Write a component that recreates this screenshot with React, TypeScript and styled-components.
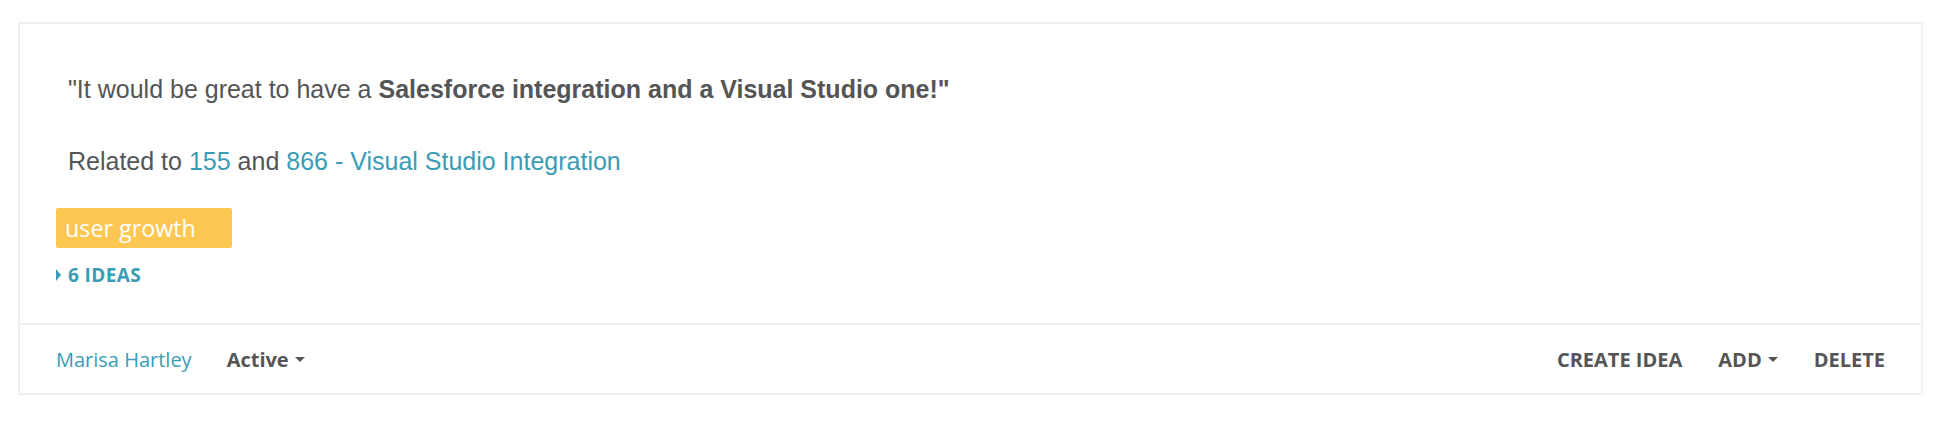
import React from "react";
import styled, { createGlobalStyle } from "styled-components";

const Global = createGlobalStyle`
  html, body { margin: 0; padding: 0; background: #ffffff; }
  body { font-family: "Open Sans", "Liberation Sans", sans-serif; }
  * { box-sizing: border-box; }
`;

const Page = styled.div`
  padding: 22px 23px 0 18px;
`;

const Card = styled.div`
  border: 2px solid #f0f0f0;
  background: #fff;
`;

const Body = styled.div`
  padding: 50px 36px 35px 36px;
`;

const Quote = styled.div`
  margin-left: 12px;
  font-family: "Liberation Sans", Arial, sans-serif;
  font-size: 25px;
  line-height: 30px;
  color: #555555;
`;

const Para = styled.p<{ $gap?: number }>`
  margin: ${(p) => p.$gap ?? 0}px 0 0 0;
`;

const Link = styled.a`
  color: #3a9cb5;
  text-decoration: none;
`;

const Tag = styled.div`
  margin-top: 32px;
  display: inline-flex;
  align-items: center;
  width: 176px;
  height: 40px;
  padding-left: 9px;
  background: #fec752;
  border-radius: 2px;
  color: #ffffff;
  font-size: 23.3px;
  font-family: "Open Sans", sans-serif;
`;

const Ideas = styled.div`
  margin-top: 14px;
  display: flex;
  align-items: center;
  gap: 7px;
  color: #3a9cb5;
  font-weight: 700;
  font-size: 19px;
  line-height: 26px;
  letter-spacing: 0.4px;
  text-transform: uppercase;
`;

const RightTri = styled.span`
  width: 0;
  height: 0;
  border-top: 6px solid transparent;
  border-bottom: 6px solid transparent;
  border-left: 5px solid #3a9cb5;
`;

const Footer = styled.div`
  border-top: 2px solid #f0f0f0;
  height: 70px;
  padding: 0 36px;
  display: flex;
  align-items: center;
  justify-content: space-between;
`;

const Group = styled.div<{ $gap: number }>`
  display: flex;
  align-items: center;
  gap: ${(p) => p.$gap}px;
`;

const Author = styled.a`
  color: #3a9cb5;
  font-size: 20px;
  text-decoration: none;
`;

const Action = styled.span<{ $upper?: boolean }>`
  display: inline-flex;
  align-items: center;
  gap: 6px;
  font-weight: 700;
  font-size: 20px;
  color: #555555;
  text-transform: ${(p) => (p.$upper ? "uppercase" : "none")};
`;

const DownTri = styled.span`
  width: 0;
  height: 0;
  border-left: 5px solid transparent;
  border-right: 5px solid transparent;
  border-top: 5px solid #555555;
`;

export default function App() {
  return (
    <>
      <Global />
      <Page>
        <Card>
          <Body>
            <Quote>
              <Para>
                "It would be great to have a <b>Salesforce integration and a Visual Studio one!"</b>
              </Para>
              <Para $gap={42}>
                Related to <Link href="#">155</Link> and{" "}
                <Link href="#">866 - Visual Studio Integration</Link>
              </Para>
            </Quote>
            <Tag>user growth</Tag>
            <Ideas>
              <RightTri />
              6 Ideas
            </Ideas>
          </Body>
          <Footer>
            <Group $gap={35}>
              <Author href="#">Marisa Hartley</Author>
              <Action>
                Active <DownTri />
              </Action>
            </Group>
            <Group $gap={36}>
              <Action $upper>Create idea</Action>
              <Action $upper>
                Add <DownTri />
              </Action>
              <Action $upper>Delete</Action>
            </Group>
          </Footer>
        </Card>
      </Page>
    </>
  );
}
